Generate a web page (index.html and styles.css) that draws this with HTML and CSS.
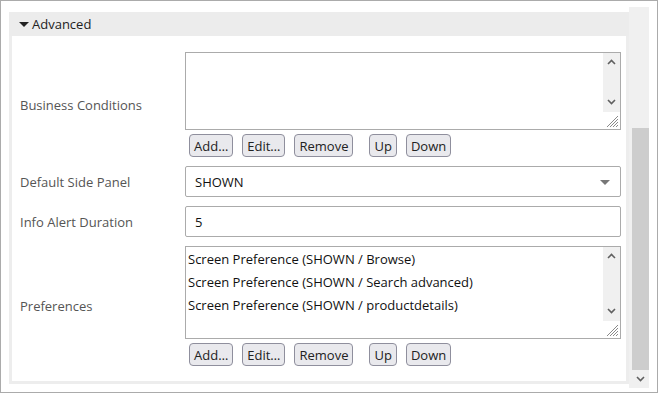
FILE: index.html
```html
<!DOCTYPE html>
<html>
  <head>
    <meta charset="utf-8" />
    <title>Advanced</title>
    <link rel="stylesheet" href="styles.css">
  </head>

  <body>
    <!-- outer frame -->
    <div class="frame">
      <div class="scroll-content">
        <div class="panel">
          <div class="panel-head"><span class="caret"></span>Advanced</div>

          <div class="panel-body">
            <!-- Business Conditions -->
            <div class="field-label">Business Conditions</div>
            <div class="field">
              <div class="listbox listbox-short">
                <div class="listbox-items"></div>
                <div class="listbox-bar">
                  <div class="listbox-track">
                    <svg class="chev" width="9" height="6" viewBox="0 0 9 6"><path d="M1 5 L4.5 1.5 L8 5" fill="none" stroke="#606060" stroke-width="1.6"/></svg>
                    <svg class="chev" width="9" height="6" viewBox="0 0 9 6"><path d="M1 1 L4.5 4.5 L8 1" fill="none" stroke="#606060" stroke-width="1.6"/></svg>
                  </div>
                  <div class="grip">
                    <svg width="17" height="17" viewBox="0 0 17 17"><path d="M15 4 L4 15 M15 7 L7 15 M15 10 L10 15 M15 13 L13 15" stroke="#8a8a8a" stroke-width="1"/></svg>
                  </div>
                </div>
              </div>
              <div class="buttons">
                <button class="btn">Add…</button>
                <button class="btn">Edit…</button>
                <button class="btn">Remove</button>
                <button class="btn btn-up">Up</button>
                <button class="btn">Down</button>
              </div>
            </div>

            <!-- Default Side Panel -->
            <div class="field-label">Default Side Panel</div>
            <div class="field">
              <div class="select">
                <span>SHOWN</span>
                <span class="select-arrow"></span>
              </div>
            </div>

            <!-- Info Alert Duration -->
            <div class="field-label">Info Alert Duration</div>
            <div class="field">
              <div class="text-input">5</div>
            </div>

            <!-- Preferences -->
            <div class="field-label">Preferences</div>
            <div class="field">
              <div class="listbox listbox-tall">
                <div class="listbox-items">
                  <div>Screen Preference (SHOWN / Browse)</div>
                  <div>Screen Preference (SHOWN / Search advanced)</div>
                  <div>Screen Preference (SHOWN / productdetails)</div>
                </div>
                <div class="listbox-bar">
                  <div class="listbox-track">
                    <svg class="chev" width="9" height="6" viewBox="0 0 9 6"><path d="M1 5 L4.5 1.5 L8 5" fill="none" stroke="#606060" stroke-width="1.6"/></svg>
                    <svg class="chev" width="9" height="6" viewBox="0 0 9 6"><path d="M1 1 L4.5 4.5 L8 1" fill="none" stroke="#606060" stroke-width="1.6"/></svg>
                  </div>
                  <div class="grip">
                    <svg width="17" height="17" viewBox="0 0 17 17"><path d="M15 4 L4 15 M15 7 L7 15 M15 10 L10 15 M15 13 L13 15" stroke="#8a8a8a" stroke-width="1"/></svg>
                  </div>
                </div>
              </div>
              <div class="buttons">
                <button class="btn">Add…</button>
                <button class="btn">Edit…</button>
                <button class="btn">Remove</button>
                <button class="btn btn-up">Up</button>
                <button class="btn">Down</button>
              </div>
            </div>
          </div>
        </div>
      </div>

      <!-- page scrollbar -->
      <div class="scrollbar">
        <div class="scrollbar-space"></div>
        <div class="scrollbar-thumb"></div>
        <div class="scrollbar-arrow">
          <svg width="9" height="6" viewBox="0 0 9 6"><path d="M1 1 L4.5 4.5 L8 1" fill="none" stroke="#606060" stroke-width="1.6"/></svg>
        </div>
      </div>
    </div>
  </body>
</html>
```

FILE: styles.css
```css
/* base */
html,
body {
  margin: 0;
  padding: 0;
  background: #fff;
  font-family: "Open Sans", "Noto Sans", sans-serif;
  font-size: 13px;
  color: #222;
}

.frame {
  width: 658px;
  height: 393px;
  box-sizing: border-box;
  border: 1px solid #ababab;
  padding: 6px 8px 4px 8px;
  display: flex;
  overflow: hidden;
}

.scroll-content {
  flex: 1;
  padding-top: 5px;
  overflow: hidden;
}

/* panel */
.panel {
  border: 3px solid #ededed;
  border-top: none;
}

.panel-head {
  height: 24px;
  margin: 0 -3px;
  padding-left: 10px;
  background: #ececec;
  display: flex;
  align-items: center;
  color: #222;
}

.caret {
  width: 0;
  height: 0;
  border-left: 5px solid transparent;
  border-right: 5px solid transparent;
  border-top: 5px solid #222;
  margin-right: 3px;
}

.panel-body {
  display: grid;
  grid-template-columns: 165px 436px;
  row-gap: 9px;
  align-items: center;
  padding: 16px 5px 15px 8px;
}

.field-label {
  color: #555;
}

/* list boxes */
.listbox {
  border: 1px solid #ababab;
  display: flex;
  box-sizing: border-box;
}
.listbox-short {
  height: 78px;
}
.listbox-tall {
  height: 93px;
}

.listbox-items {
  flex: 1;
  padding: 1px 2px;
  line-height: 23px;
  color: #111;
}

.listbox-bar {
  width: 17px;
  display: flex;
  flex-direction: column;
}

.listbox-track {
  flex: 1;
  background: #f0f0f0;
  display: flex;
  flex-direction: column;
  justify-content: space-between;
  align-items: center;
  padding: 6px 0 7px;
}

.grip {
  height: 17px;
}
.grip svg {
  display: block;
}

.chev {
  display: block;
}

/* buttons */
.buttons {
  display: flex;
  gap: 9px;
  margin: 4px 0 0 4px;
}

.btn {
  height: 23px;
  padding: 0 4px;
  font-family: inherit;
  font-size: 13px;
  color: #222;
  background: #e9e9ed;
  border: 1px solid #8f8f9d;
  border-radius: 4px;
}

.btn-up {
  margin-left: 7px;
}

/* select / input */
.select,
.text-input {
  height: 31px;
  box-sizing: border-box;
  border: 1px solid #ababab;
  border-radius: 2px;
  padding: 1px 10px 0 9px;
  display: flex;
  align-items: center;
  color: #111;
}

.select {
  justify-content: space-between;
}

.select-arrow {
  width: 0;
  height: 0;
  border-left: 5px solid transparent;
  border-right: 5px solid transparent;
  border-top: 5px solid #777;
}

/* page scrollbar */
.scrollbar {
  width: 20px;
  background: #f0f0f0;
  display: flex;
  flex-direction: column;
}

.scrollbar-space {
  height: 121px;
}

.scrollbar-thumb {
  height: 242px;
  margin-left: 3px;
  background: #cdcdcd;
}

.scrollbar-arrow {
  flex: 1;
  display: flex;
  align-items: center;
  justify-content: center;
  padding-left: 3px;
}
.scrollbar-arrow svg {
  display: block;
}
```
